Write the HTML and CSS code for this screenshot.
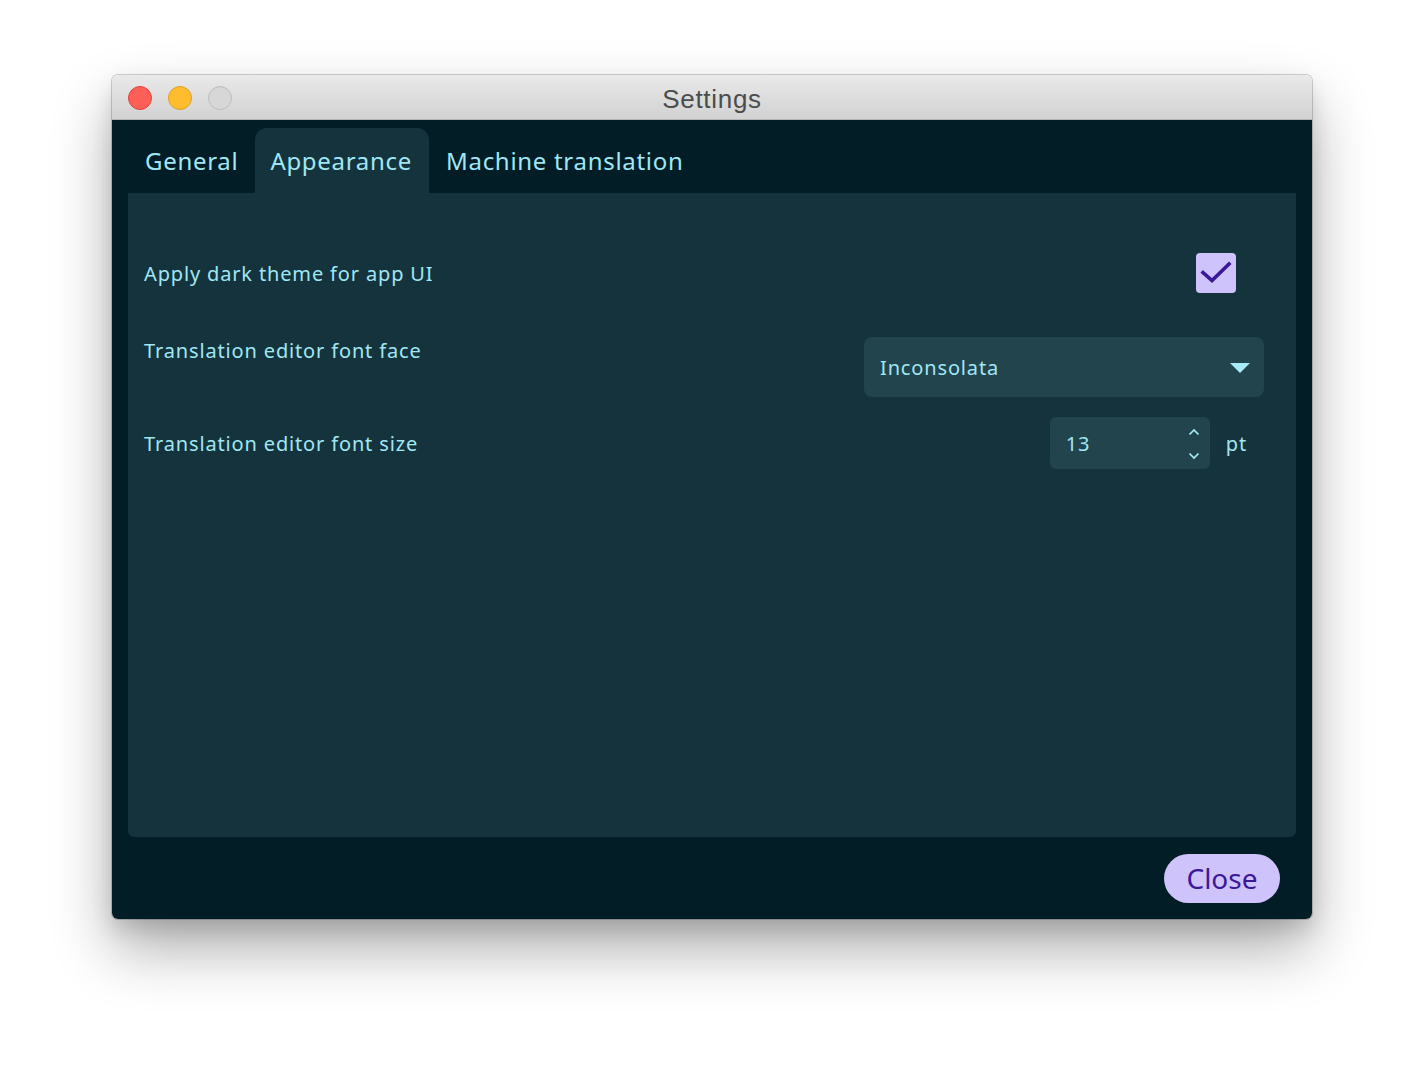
FILE: index.html
```html
<!DOCTYPE html>
<html>
<head>
<meta charset="utf-8">
<link rel="stylesheet" href="styles.css">
</head>
<body>
<div class="window">
  <div class="titlebar">
    <div class="lights">
      <span class="light red"></span>
      <span class="light yellow"></span>
      <span class="light gray"></span>
    </div>
    <div class="title">Settings</div>
  </div>
  <div class="content">
    <div class="tabs">
      <div class="tab">General</div>
      <div class="tab active">Appearance</div>
      <div class="tab">Machine translation</div>
    </div>
    <div class="panel">
      <div class="row row-check">
        <div class="label">Apply dark theme for app UI</div>
        <div class="checkbox">
          <svg width="40" height="40" viewBox="0 0 40 40"><path d="M7 19.5 L16 27.5 L33 11" fill="none" stroke="#3b1897" stroke-width="3.6" stroke-linecap="square"/></svg>
        </div>
      </div>
      <div class="row row-face">
        <div class="label">Translation editor font face</div>
        <div class="select">
          <span class="select-text">Inconsolata</span>
          <svg class="caret" width="20" height="10" viewBox="0 0 20 10"><path d="M0 0 H20 L10 10 Z" fill="#a6ebf7"/></svg>
        </div>
      </div>
      <div class="row row-size">
        <div class="label">Translation editor font size</div>
        <div class="size-group">
          <div class="spin">
            <span class="spin-text">13</span>
            <div class="arrows">
              <svg width="12" height="8" viewBox="0 0 12 8"><path d="M1.5 6.5 L6 2 L10.5 6.5" fill="none" stroke="#a6ebf7" stroke-width="1.7"/></svg>
              <svg width="12" height="8" viewBox="0 0 12 8"><path d="M1.5 1.5 L6 6 L10.5 1.5" fill="none" stroke="#a6ebf7" stroke-width="1.7"/></svg>
            </div>
          </div>
          <span class="unit">pt</span>
        </div>
      </div>
    </div>
    <div class="footer">
      <button class="close">Close</button>
    </div>
  </div>
</div>
</body>
</html>
```

FILE: styles.css
```css
html, body {
  margin: 0;
  padding: 0;
  background: #ffffff;
}
body {
  font-family: "Noto Sans", "Open Sans", sans-serif;
  height: 1068px;
  overflow: hidden;
}
.window {
  width: 1200px;
  height: 844px;
  margin: 75px auto 0;
  border-radius: 6px;
  overflow: hidden;
  box-shadow: 0 0 0 1px rgba(0,0,0,0.18), 0 30px 60px rgba(0,0,0,0.32), 0 10px 20px rgba(0,0,0,0.12);
  display: flex;
  flex-direction: column;
}
.titlebar {
  height: 44px;
  background: linear-gradient(#e9e9e9, #d2d2d2);
  border-bottom: 1px solid #b4b4b4;
  display: flex;
  align-items: center;
  position: relative;
}
.lights {
  display: flex;
  gap: 16px;
  padding-left: 16px;
  padding-top: 2px;
}
.light {
  width: 24px;
  height: 24px;
  border-radius: 50%;
  box-sizing: border-box;
  display: block;
}
.red { background: #fe5f57; border: 1px solid #e0443e; }
.yellow { background: #febc2e; border: 1px solid #dea123; }
.gray { background: #d7d7d7; border: 1px solid #bdbdbd; }
.title {
  position: absolute;
  left: 0;
  right: 0;
  top: 0;
  bottom: 0;
  display: flex;
  align-items: center;
  justify-content: center;
  font-family: "Liberation Sans", "DejaVu Sans", sans-serif;
  font-size: 26px;
  letter-spacing: 0.7px;
  color: #4c4c4c;
  padding-top: 5px;
}
.content {
  flex: 1;
  background: #021d25;
  padding: 8px 16px 16px;
  display: flex;
  flex-direction: column;
}
.tabs {
  display: flex;
  height: 65px;
}
.tab {
  padding: 0 17px 0 17px;
  display: flex;
  align-items: center;
  font-size: 24px;
  color: #a0e7f5;
  letter-spacing: 0.7px;
}
.tab.active {
  background: #15333c;
  border-radius: 12px 12px 0 0;
  padding: 0 17px 0 15px;
}
.panel {
  height: 644px;
  background: #15333c;
  border-radius: 0 0 6px 6px;
  padding: 40px 32px 0 16px;
  box-sizing: border-box;
  display: flex;
  flex-direction: column;
}
.row {
  display: flex;
  justify-content: space-between;
}
.label {
  font-size: 20px;
  color: #a0e7f5;
  letter-spacing: 0.85px;
}
.row-check {
  height: 80px;
  align-items: center;
}
.checkbox {
  width: 40px;
  height: 40px;
  border-radius: 4px;
  background: #cfc3fc;
  margin-right: 28px;
}
.checkbox svg {
  display: block;
}
.row-face {
  margin-top: 24px;
  height: 60px;
  align-items: flex-start;
}
.select {
  width: 400px;
  height: 60px;
  background: #22444d;
  border-radius: 8px;
  box-sizing: border-box;
  padding: 0 14px 0 16px;
  display: flex;
  align-items: center;
  justify-content: space-between;
}
.select-text, .spin-text {
  font-size: 20px;
  color: #a0e7f5;
  letter-spacing: 0.85px;
}
.caret {
  margin-top: 1px;
}
.row-size {
  margin-top: 20px;
  height: 52px;
  align-items: center;
}
.size-group {
  display: flex;
  align-items: center;
}
.spin {
  width: 160px;
  height: 52px;
  background: #22444d;
  border-radius: 6px;
  box-sizing: border-box;
  padding: 0 10px 0 16px;
  display: flex;
  align-items: center;
  justify-content: space-between;
}
.arrows {
  display: flex;
  flex-direction: column;
  gap: 16px;
  margin-top: 1px;
}
.arrows svg {
  display: block;
}
.unit {
  font-size: 20px;
  color: #a0e7f5;
  margin-left: 16px;
  margin-right: 17px;
  letter-spacing: 0.85px;
}
.footer {
  display: flex;
  justify-content: flex-end;
  padding: 17px 16px 0;
}
.close {
  width: 116px;
  height: 49px;
  border: none;
  border-radius: 25px;
  background: #cfc3fc;
  color: #3b1897;
  font-family: "Noto Sans", "Open Sans", sans-serif;
  font-size: 28px;
  padding: 0 0 2px;
  cursor: pointer;
}
```
